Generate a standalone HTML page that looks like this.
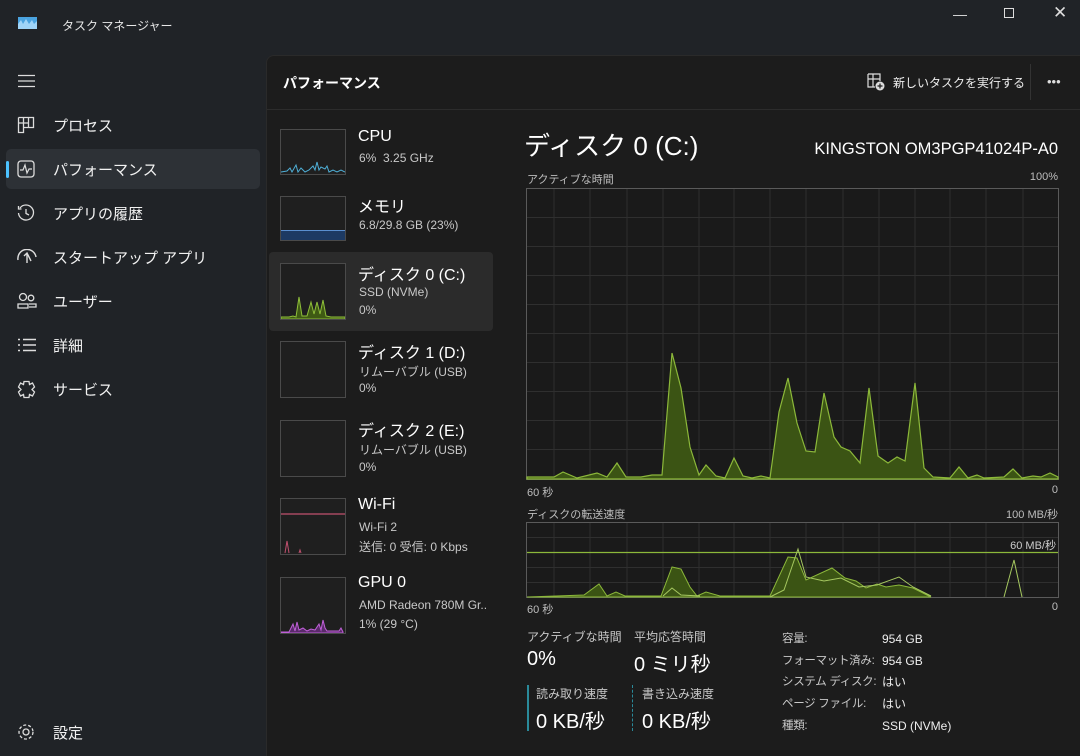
<!DOCTYPE html>
<html><head><meta charset="utf-8"><style>
*{margin:0;padding:0;box-sizing:border-box}
body{width:1080px;height:756px;background:#202327;font-family:"Liberation Sans","Noto Sans CJK JP",sans-serif;color:#fff;position:relative;overflow:hidden}
.a{position:absolute;white-space:nowrap}
.nav{font-size:15px;left:53px;color:#f2f2f2}
.ic{position:absolute;left:17px}
.main{position:absolute;left:266px;top:55px;width:814px;height:701px;background:#1c1c1c;border-top-left-radius:8px;border-top:1px solid #2a2a2a;border-left:1px solid #2a2a2a}
.th{position:absolute;left:280px;width:66px;border:1px solid #4a4a4a;background:#1f1f1f}
.t1{font-size:16px;left:358px;color:#fff}
.t2{font-size:12px;left:359px;color:#c8c8c8}
.lbl{font-size:11px;color:#bdbdbd}
.big{font-size:20px;color:#fff}
.sm{font-size:12px;color:#c8c8c8}
</style></head><body>
<svg class="a" style="left:18px;top:17px" width="19" height="12"><rect width="19" height="12" fill="#4aa3e0"/><path d="M0 7 L3 3 L5 7 L8 2 L11 7 L14 3 L16 7 L19 4 V12 H0Z" fill="#9fd4f8"/></svg>
<div class="a" style="left:62px;top:17px;font-size:12px;color:#e8e8e8">タスク マネージャー</div>
<div class="a" style="left:953px;top:6px;font-size:14px;color:#ddd">—</div>
<div class="a" style="left:1004px;top:8px;width:10px;height:10px;border:1px solid #ddd"></div>
<div class="a" style="left:1053px;top:3px;font-size:17px;color:#ddd">✕</div>
<svg class="ic" style="top:74px" width="20" height="14"><path d="M1 1.5H18M1 7H18M1 12.5H18" stroke="#ddd" stroke-width="1.3"/></svg>
<svg class="ic" style="top:116px" width="18" height="18"><path d="M1.5 1.5H11.5V11.5M1.5 1.5V16.5H6.5V1.5M1.5 7H11.5M11.5 1.5H16.5V11.5H6.5" fill="none" stroke="#ddd" stroke-width="1.3"/></svg>
<div class="a nav" style="top:115px">プロセス</div>
<div class="a" style="left:6px;top:149px;width:254px;height:40px;background:#2d3136;border-radius:5px"></div>
<div class="a" style="left:6px;top:161px;width:3px;height:17px;background:#4cc2ff;border-radius:2px"></div>
<svg class="ic" style="top:160px" width="18" height="18"><rect x="1" y="1" width="16" height="16" rx="3" fill="none" stroke="#ddd" stroke-width="1.3"/><path d="M3 10H6L8 5L10 13L12 9H15" fill="none" stroke="#ddd" stroke-width="1.2"/></svg>
<div class="a nav" style="top:159px">パフォーマンス</div>
<svg class="ic" style="top:204px" width="18" height="18"><path d="M3 4A7.5 7.5 0 1 1 1.5 9M1.5 2V5H4.5M9 5V9.5L12 11" fill="none" stroke="#ddd" stroke-width="1.3"/></svg>
<div class="a nav" style="top:203px">アプリの履歴</div>
<svg class="ic" style="top:249px" width="20" height="16"><path d="M1 11A9 9 0 0 1 19 8M10 4V14M7 7L10 4L14 12" fill="none" stroke="#ddd" stroke-width="1.4"/></svg>
<div class="a nav" style="top:247px">スタートアップ アプリ</div>
<svg class="ic" style="top:292px" width="20" height="18"><circle cx="6" cy="5" r="3.5" fill="none" stroke="#ddd" stroke-width="1.3"/><circle cx="14" cy="6" r="2.8" fill="none" stroke="#ddd" stroke-width="1.3"/><path d="M1 16V12H11V16ZM12 12H19V15H12" fill="none" stroke="#ddd" stroke-width="1.3"/></svg>
<div class="a nav" style="top:291px">ユーザー</div>
<svg class="ic" style="top:338px" width="20" height="14"><path d="M1 1.5H3M1 7H3M1 12.5H3M6 1.5H19M6 7H19M6 12.5H19" stroke="#ddd" stroke-width="1.4"/></svg>
<div class="a nav" style="top:335px">詳細</div>
<svg class="ic" style="top:380px" width="19" height="19"><path d="M7 1.5H12L12.5 4.5L15.5 3L17.5 7L15 9.5L17.5 12L15.5 16L12.5 14.5L12 17.5H7L6.5 14.5L3.5 16L1.5 12L4 9.5L1.5 7L3.5 3L6.5 4.5Z" fill="none" stroke="#ddd" stroke-width="1.3"/></svg>
<div class="a nav" style="top:379px">サービス</div>
<svg class="ic" style="top:723px" width="18" height="18"><circle cx="9" cy="9" r="3" fill="none" stroke="#ddd" stroke-width="1.3"/><circle cx="9" cy="9" r="7" fill="none" stroke="#ddd" stroke-width="1.3" stroke-dasharray="3 2"/></svg>
<div class="a nav" style="top:722px">設定</div>
<div class="main"></div>
<div class="a" style="left:283px;top:73px;font-size:14px;font-weight:bold">パフォーマンス</div>
<svg class="a" style="left:867px;top:73px" width="18" height="18"><path d="M1 1H13V8M1 1V14H8M1 6H13M6 1V14" fill="none" stroke="#ddd" stroke-width="1.2"/><circle cx="13" cy="13" r="4.5" fill="#ddd"/><path d="M13 10.5V15.5M10.5 13H15.5" stroke="#1c1c1c" stroke-width="1.2"/></svg>
<div class="a" style="left:893px;top:74px;font-size:12px;color:#eee">新しいタスクを実行する</div>
<div class="a" style="left:1030px;top:64px;width:1px;height:36px;background:#333"></div>
<div class="a" style="left:1047px;top:74px;font-size:13px;color:#ddd;letter-spacing:0px">•••</div>
<div class="a" style="left:267px;top:109px;width:813px;height:1px;background:#2c2c2c"></div>
<div class="a" style="left:269px;top:252px;width:224px;height:79px;background:#2b2b2b;border-radius:4px"></div>
<div class="th" style="top:129px;height:46px"><svg width="64" height="44"><path d="M0 42 L6 41 L9 38 L11 42 L15 35 L17 42 L20 38 L24 42 L28 40 L32 36 L34 40 L36 32 L38 40 L40 37 L44 39 L46 36 L48 42 L52 40 L56 42 L60 40 L64 42" fill="none" stroke="#4fb0d8" stroke-width="1"/></svg></div>
<div class="a t1" style="top:128px">CPU</div><div class="a t2" style="top:151px">6%&nbsp; 3.25 GHz</div>
<div class="th" style="top:196px;height:45px"><div style="position:absolute;left:0;right:0;bottom:0;height:10px;background:#1d3a63;border-top:1px solid #5a8fd0"></div></div>
<div class="a t1" style="top:193px">メモリ</div><div class="a t2" style="top:218px">6.8/29.8 GB (23%)</div>
<div class="th" style="top:263px;height:57px"><svg width="64" height="55"><path d="M0 53 L8 53 L12 52 L15 53 L18 33 L21 52 L26 52 L30 38 L33 50 L36 38 L39 50 L42 36 L45 52 L50 53 L64 53 V55 H0Z" fill="#3f5a14" stroke="#8fbf3a" stroke-width="1"/></svg></div>
<div class="a t1" style="top:261px">ディスク 0 (C:)</div><div class="a t2" style="top:285px">SSD (NVMe)</div><div class="a t2" style="top:303px">0%</div>
<div class="th" style="top:341px;height:57px"></div>
<div class="a t1" style="top:339px">ディスク 1 (D:)</div><div class="a t2" style="top:363px">リムーバブル (USB)</div><div class="a t2" style="top:381px">0%</div>
<div class="th" style="top:420px;height:57px"></div>
<div class="a t1" style="top:417px">ディスク 2 (E:)</div><div class="a t2" style="top:441px">リムーバブル (USB)</div><div class="a t2" style="top:460px">0%</div>
<div class="th" style="top:498px;height:57px"><svg width="64" height="55"><path d="M0 15H64" stroke="#c0506e" stroke-width="1.2"/><path d="M4 54 L6 42 L8 54 M18 54 L19 51 L20 54" fill="none" stroke="#c0506e"/></svg></div>
<div class="a t1" style="top:496px">Wi-Fi</div><div class="a t2" style="top:520px">Wi-Fi 2</div><div class="a t2" style="top:538px">送信: 0 受信: 0 Kbps</div>
<div class="th" style="top:577px;height:57px"><svg width="64" height="55"><path d="M0 54 L8 54 L12 46 L14 53 L16 44 L18 52 L22 50 L26 53 L30 51 L34 52 L38 46 L40 52 L42 42 L44 50 L46 53 L58 53 L60 50 L62 54 V55 H0Z" fill="#5a2a6a" stroke="#c060d8" stroke-width="1"/></svg></div>
<div class="a t1" style="top:574px">GPU 0</div><div class="a t2" style="top:598px">AMD Radeon 780M Gr..</div><div class="a t2" style="top:617px">1% (29 °C)</div>
<div class="a" style="left:524px;top:126px;font-size:26px;color:#fff">ディスク 0 (C:)</div>
<div class="a" style="right:22px;top:140px;font-size:16.5px;color:#fff">KINGSTON OM3PGP41024P-A0</div>
<div class="a lbl" style="left:527px;top:171px">アクティブな時間</div>
<div class="a lbl" style="right:22px;top:171px">100%</div>
<svg class="a" style="left:526px;top:188px" width="533" height="292">
<rect x="0.5" y="0.5" width="532" height="291" fill="#1a1a1a" stroke="#5a5a5a"/>
<g stroke="#2f2f2f" stroke-width="1">
<path d="M28 1V291M64 1V291M101 1V291M137 1V291M173 1V291M208 1V291M244 1V291M280 1V291M317 1V291M353 1V291M389 1V291M424 1V291M460 1V291M497 1V291"/>
<path d="M1 29.5H532M1 58.5H532M1 87.5H532M1 116.5H532M1 145.5H532M1 174.5H532M1 203.5H532M1 232.5H532M1 261.5H532"/>
</g>
<g transform="translate(-526,-188)">
<path d="M527 477 L554 477 L563 472 L577 478 L597 473 L607 477 L617 463 L626 477 L641 477 L652 475 L662 475 L672 353 L681 388 L690 447 L699 475 L706 465 L716 476 L725 478 L734 458 L743 476 L752 478 L761 476 L770 478 L779 412 L788 378 L797 423 L806 451 L815 452 L824 393 L834 437 L841 447 L850 451 L860 463 L869 388 L878 456 L888 463 L897 457 L905 461 L915 383 L924 468 L933 477 L950 478 L959 467 L968 478 L977 475 L984 478 L1004 477 L1013 469 L1022 478 L1033 476 L1041 477 L1050 473 L1058 477 L1058 479 L527 479Z" fill="#3b5414" stroke="#8cb83a" stroke-width="1.2"/>
</g>
</svg>
<div class="a lbl" style="left:527px;top:484px">60 秒</div>
<div class="a lbl" style="right:22px;top:484px">0</div>
<div class="a lbl" style="left:527px;top:506px">ディスクの転送速度</div>
<div class="a lbl" style="right:22px;top:506px">100 MB/秒</div>
<svg class="a" style="left:526px;top:522px" width="533" height="76">
<rect x="0.5" y="0.5" width="532" height="75" fill="#1a1a1a" stroke="#5a5a5a"/>
<g stroke="#2f2f2f"><path d="M28 1V75M64 1V75M101 1V75M137 1V75M173 1V75M208 1V75M244 1V75M280 1V75M317 1V75M353 1V75M389 1V75M424 1V75M460 1V75M497 1V75M1 15.5H532M1 45.5H532M1 60.5H532"/></g>
<path d="M1 30.5H532" stroke="#8cb83a" stroke-width="1.2"/>
<g transform="translate(-526,-522)">
<path d="M527 597 L556 596 L584 595 L599 584 L607 596 L616 592 L625 596 L661 596 L672 567 L681 569 L690 587 L697 596 L706 592 L720 596 L770 596 L788 557 L797 558 L806 580 L832 568 L845 578 L856 581 L866 588 L877 584 L886 587 L899 585 L913 588 L931 597Z" fill="#3b5414" stroke="#8cb83a" stroke-width="1"/>
<path d="M663 596 L672 588 L681 595 L700 596 M770 597 L784 590 L798 549 L806 577 L824 581 L841 578 L859 587 L877 585 L899 577 L913 587 L931 596 M1004 597 L1014 560 L1022 597" fill="none" stroke="#a6c860" stroke-width="1"/>
</g>
</svg>
<div class="a lbl" style="right:24px;top:537px;color:#ccc">60 MB/秒</div>
<div class="a lbl" style="left:527px;top:601px">60 秒</div>
<div class="a lbl" style="right:22px;top:601px">0</div>
<div class="a sm" style="left:527px;top:628px">アクティブな時間</div>
<div class="a big" style="left:527px;top:648px">0%</div>
<div class="a sm" style="left:634px;top:628px">平均応答時間</div>
<div class="a big" style="left:634px;top:648px">0 ミリ秒</div>
<div class="a" style="left:527px;top:685px;width:2px;height:46px;background:#2a8a9a"></div>
<div class="a sm" style="left:536px;top:685px">読み取り速度</div>
<div class="a big" style="left:536px;top:705px">0 KB/秒</div>
<div class="a" style="left:632px;top:685px;height:46px;border-left:1px dashed #2a8a9a"></div>
<div class="a sm" style="left:642px;top:685px">書き込み速度</div>
<div class="a big" style="left:642px;top:705px">0 KB/秒</div>
<div class="a" style="left:782px;top:629px;line-height:21.7px;font-size:11.5px;color:#c8c8c8;letter-spacing:-0.3px">容量:<br>フォーマット済み:<br>システム ディスク:<br>ページ ファイル:<br>種類:</div>
<div class="a sm" style="left:882px;top:629px;line-height:21.7px;color:#eee">954 GB<br>954 GB<br>はい<br>はい<br>SSD (NVMe)</div>
</body></html>
